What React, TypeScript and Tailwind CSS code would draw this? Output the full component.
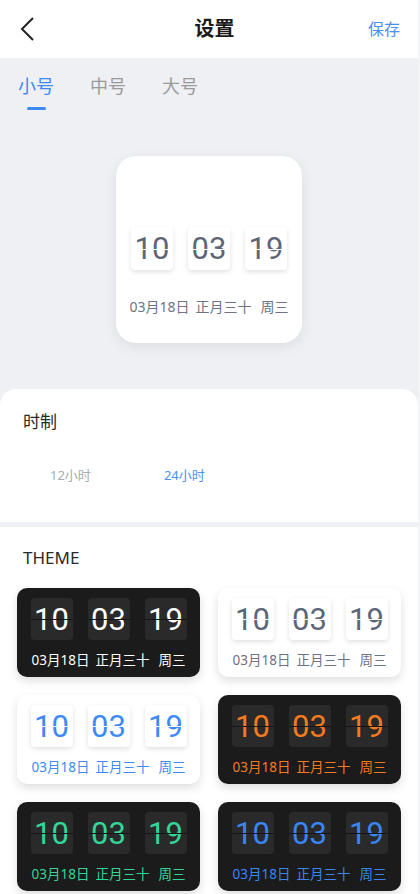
import React from 'react';

const cjk = "font-['Noto_Sans','Noto_Sans_CJK_SC',sans-serif]";

type Theme = {
  card: string;
  box: string;
  digit: string;
  line: string;
  date: string;
};

const themes: Theme[] = [
  { card: 'bg-[#1b1b1b]', box: 'bg-[#2a2a2a]', digit: 'text-white', line: 'bg-[#151515]', date: 'text-white' },
  { card: 'bg-white', box: 'bg-white shadow-[0_2px_5px_rgba(0,0,0,0.12)]', digit: 'text-[#5c6678]', line: 'bg-white', date: 'text-[#6b7384]' },
  { card: 'bg-white', box: 'bg-white shadow-[0_2px_5px_rgba(0,0,0,0.12)]', digit: 'text-[#3d8af7]', line: 'bg-white', date: 'text-[#3d8af7]' },
  { card: 'bg-[#1b1b1b]', box: 'bg-[#2a2a2a]', digit: 'text-[#f47b20]', line: 'bg-[#151515]', date: 'text-[#f47b20]' },
  { card: 'bg-[#1b1b1b]', box: 'bg-[#2a2a2a]', digit: 'text-[#33d698]', line: 'bg-[#151515]', date: 'text-[#33d698]' },
  { card: 'bg-[#1b1b1b]', box: 'bg-[#2a2a2a]', digit: 'text-[#3a86f5]', line: 'bg-[#151515]', date: 'text-[#3a86f5]' },
];

function Digit({ value, theme, h }: { value: string; theme: Theme; h: string }) {
  return (
    <div className={`relative flex w-[42px] ${h} items-center justify-center rounded-[4px] ${theme.box}`}>
      <span className={`font-['Roboto',sans-serif] text-[31px] leading-none ${theme.digit}`}>{value}</span>
      <div className={`absolute left-0 right-0 top-1/2 h-px ${theme.line}`} />
    </div>
  );
}

function DateLine({ cls }: { cls: string }) {
  return (
    <div className={`flex items-center ${cjk} ${cls}`}>
      <span>03月18日</span>
      <span className="ml-[6px]">正月三十</span>
      <span className="ml-[9px]">周三</span>
    </div>
  );
}

function ThemeCard({ theme }: { theme: Theme }) {
  return (
    <div className={`flex h-[89px] flex-col items-center rounded-[10px] pt-[10px] shadow-[0_4px_10px_rgba(0,0,0,0.13)] ${theme.card}`}>
      <div className="flex gap-[15px]">
        {['10', '03', '19'].map((v) => (
          <Digit key={v} value={v} theme={theme} h="h-[42px]" />
        ))}
      </div>
      <DateLine cls={`mt-[10px] text-[13.5px] ${theme.date}`} />
    </div>
  );
}

export default function App() {
  return (
    <div className="flex min-h-[894px] w-[420px] bg-[#eef0f4]">
      <div className={`w-[418px] ${cjk}`}>
        {/* Header */}
        <div className="flex h-[58px] items-center justify-between bg-white px-[18px]">
          <svg width="18" height="26" viewBox="0 0 18 26" className="ml-[1px]">
            <polyline points="14,2 3,13 14,24" fill="none" stroke="#222" strokeWidth="2" />
          </svg>
          <span className="ml-[24px] text-[20px] font-semibold text-[#1a1a1a]">设置</span>
          <span className="text-[16px] text-[#4a8ff7]">保存</span>
        </div>

        {/* Size tabs */}
        <div className="flex gap-[36px] pl-[18px] pt-[14px]">
          {['小号', '中号', '大号'].map((t, i) => (
            <div key={t} className="flex flex-col items-center">
              <span className={`text-[18px] leading-[28px] ${i === 0 ? 'text-[#3d8af7]' : 'text-[#9a9a9a]'}`}>{t}</span>
              <div className={`mt-[7px] h-[3px] w-[19px] rounded-full ${i === 0 ? 'bg-[#3d8af7]' : 'bg-transparent'}`} />
            </div>
          ))}
        </div>

        {/* Preview */}
        <div className="flex justify-center pt-[46px]">
          <div className="flex h-[187px] w-[186px] flex-col items-center rounded-[20px] bg-white pt-[71px] shadow-[0_4px_14px_rgba(0,0,0,0.08)]">
            <div className="flex gap-[15px]">
              {['10', '03', '19'].map((v) => (
                <Digit key={v} value={v} theme={themes[1]} h="h-[43px]" />
              ))}
            </div>
            <DateLine cls="mt-[26px] text-[14px] text-[#6b7384]" />
          </div>
        </div>

        {/* Time format */}
        <div className="mt-[46px] h-[133px] rounded-t-[16px] bg-white px-[23px] pt-[20px]">
          <div className="text-[17px] text-[#2a2a2a]">时制</div>
          <div className="mt-[31px] flex pl-[27px] text-[13px]">
            <span className="text-[#aaaaaa]">12小时</span>
            <span className="ml-[73px] text-[#4a8ff7]">24小时</span>
          </div>
        </div>

        {/* Theme */}
        <div className="mt-[5px] bg-white px-[17px] pb-[3px] pt-[19px]">
          <div className="pl-[6px] text-[17px] leading-[24px] text-[#2a2a2a]">THEME</div>
          <div className="mt-[18px] grid grid-cols-2 gap-[18px]">
            {themes.map((t, i) => (
              <ThemeCard key={i} theme={t} />
            ))}
          </div>
        </div>
      </div>
      <div className="w-[2px] bg-[#f3f4f6]" />
    </div>
  );
}
